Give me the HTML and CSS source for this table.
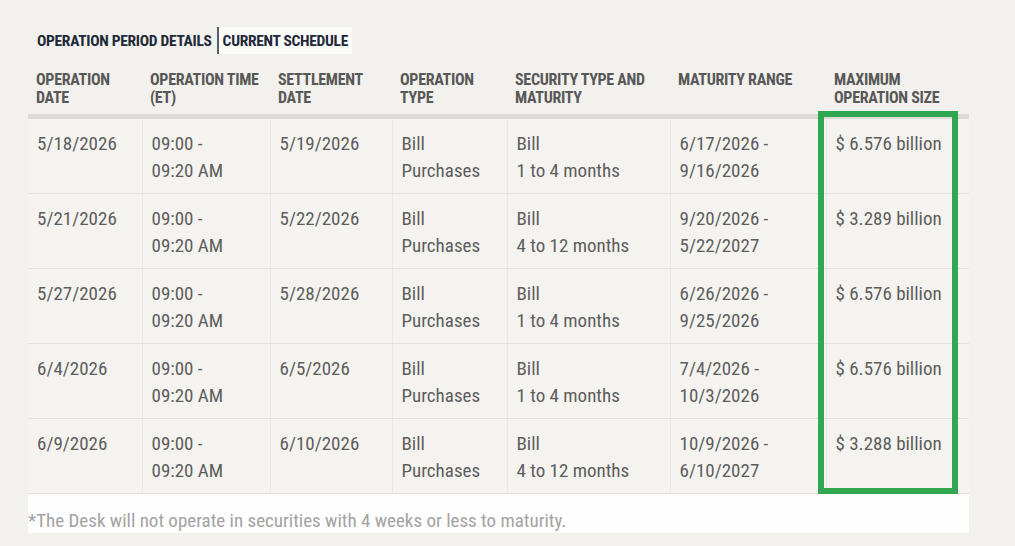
FILE: index.html
```html
<!DOCTYPE html>
<html lang="en">
<head>
<meta charset="utf-8">
<title>Current Schedule</title>
<link rel="stylesheet" href="styles.css">
</head>
<body>
<div class="page">
  <div class="tabs">
    <span class="tab">OPERATION PERIOD DETAILS</span>
    <span class="tab tab-active">CURRENT SCHEDULE</span>
  </div>
  <div class="table-wrap">
    <table class="schedule">
      <colgroup>
        <col class="c1"><col class="c2"><col class="c3"><col class="c4"><col class="c5"><col class="c6"><col class="c7">
      </colgroup>
      <thead>
        <tr>
          <th>OPERATION<br>DATE</th>
          <th>OPERATION TIME<br>(ET)</th>
          <th>SETTLEMENT<br>DATE</th>
          <th>OPERATION<br>TYPE</th>
          <th>SECURITY TYPE AND<br>MATURITY</th>
          <th>MATURITY RANGE</th>
          <th>MAXIMUM<br>OPERATION SIZE</th>
        </tr>
      </thead>
      <tbody>
        <tr>
          <td>5/18/2026</td>
          <td>09:00 -<br>09:20 AM</td>
          <td>5/19/2026</td>
          <td>Bill<br>Purchases</td>
          <td>Bill<br>1 to 4 months</td>
          <td>6/17/2026 -<br>9/16/2026</td>
          <td>$ 6.576 billion</td>
        </tr>
        <tr>
          <td>5/21/2026</td>
          <td>09:00 -<br>09:20 AM</td>
          <td>5/22/2026</td>
          <td>Bill<br>Purchases</td>
          <td>Bill<br>4 to 12 months</td>
          <td>9/20/2026 -<br>5/22/2027</td>
          <td>$ 3.289 billion</td>
        </tr>
        <tr>
          <td>5/27/2026</td>
          <td>09:00 -<br>09:20 AM</td>
          <td>5/28/2026</td>
          <td>Bill<br>Purchases</td>
          <td>Bill<br>1 to 4 months</td>
          <td>6/26/2026 -<br>9/25/2026</td>
          <td>$ 6.576 billion</td>
        </tr>
        <tr>
          <td>6/4/2026</td>
          <td>09:00 -<br>09:20 AM</td>
          <td>6/5/2026</td>
          <td>Bill<br>Purchases</td>
          <td>Bill<br>1 to 4 months</td>
          <td>7/4/2026 -<br>10/3/2026</td>
          <td>$ 6.576 billion</td>
        </tr>
        <tr>
          <td>6/9/2026</td>
          <td>09:00 -<br>09:20 AM</td>
          <td>6/10/2026</td>
          <td>Bill<br>Purchases</td>
          <td>Bill<br>4 to 12 months</td>
          <td>10/9/2026 -<br>6/10/2027</td>
          <td>$ 3.288 billion</td>
        </tr>
      </tbody>
    </table>
    <div class="highlight"></div>
  </div>
  <div class="footnote">*The Desk will not operate in securities with 4 weeks or less to maturity.</div>
</div>
</body>
</html>
```
FILE: styles.css
```css
html, body {
  margin: 0;
  padding: 0;
  background: #f3f1ed;
}
body {
  font-family: "Roboto", "Liberation Sans", sans-serif;
  font-stretch: 75%;
  width: 1015px;
  height: 546px;
  overflow: hidden;
}
.page {
  padding: 27px 0 0 28px;
}
.tabs {
  display: flex;
  align-items: stretch;
  height: 27px;
  margin-left: 9px;
}
.tab {
  display: flex;
  align-items: center;
  font-weight: 700;
  font-size: 15.5px;
  color: #1e2838;
  letter-spacing: -0.3px;
}
.tab-active {
  background: #fbfbfa;
  border-left: 2px solid #56606a;
  margin-left: 5px;
  padding: 0 4px 0 4px;
}
.table-wrap {
  position: relative;
  width: 941px;
  margin-top: 14px;
}
.schedule {
  border-collapse: collapse;
  table-layout: fixed;
  width: 941px;
}
.c1 { width: 114px; }
.c2 { width: 128px; }
.c3 { width: 122px; }
.c4 { width: 115px; }
.c5 { width: 163px; }
.c6 { width: 156px; }
.c7 { width: 143px; }
.schedule th {
  text-align: left;
  vertical-align: top;
  font-weight: 700;
  font-size: 16px;
  line-height: 18px;
  color: #585858;
  padding: 3px 9px 7px 8px;
  border-bottom: 5px solid #dcdbd8;
  letter-spacing: -0.3px;
}
.schedule td {
  vertical-align: top;
  font-size: 19px;
  line-height: 27px;
  color: #5d5d5d;
  padding: 11px 9px 9px 9px;
  height: 54px;
  border-bottom: 1px solid #e4e1dd;
  border-left: 1px solid #ebe8e4;
  background: #f5f3ef;
}
.schedule td:first-child {
  border-left: none;
}
.highlight {
  position: absolute;
  left: 790px;
  top: 43px;
  width: 128px;
  height: 371px;
  border: 6px solid #2fa84f;
  pointer-events: none;
}
.footnote {
  width: 941px;
  height: 39px;
  box-sizing: border-box;
  background: #fefefe;
  color: #a3a3a3;
  font-size: 19px;
  padding-top: 17px;
  line-height: 20px;
}
```
